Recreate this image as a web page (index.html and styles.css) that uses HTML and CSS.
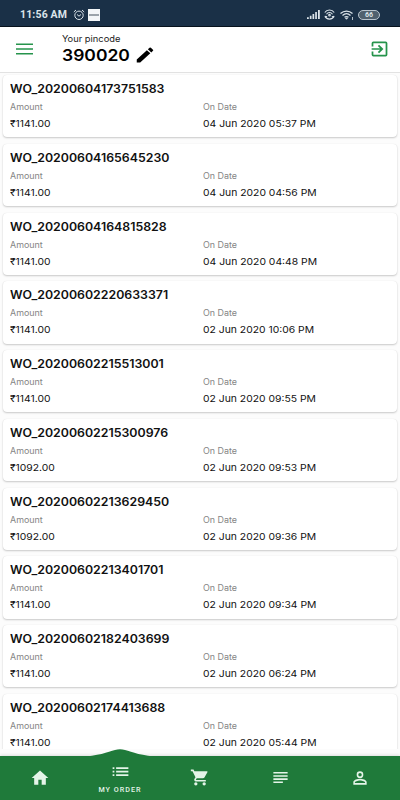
FILE: index.html
```html
<!DOCTYPE html>
<html lang="en">
<head>
<meta charset="utf-8">
<title>My Order</title>
<link rel="stylesheet" href="styles.css">
</head>
<body>
<div class="status">
  <span class="clock">11:56 AM</span>
  <svg class="alarm" width="12" height="12" viewBox="0 0 12 12" fill="none" stroke="currentColor"><circle cx="6" cy="6.3" r="4.2"/><path d="M.8 3 3 1M11.2 3 9 1M4 5.5 6 7.2 8 5.5"/></svg>
  <svg class="note" width="12" height="12" viewBox="0 0 12 12"><path fill="#f3f6f8" d="M0 0h12v12H0z"/><path stroke="#43515d" d="M1 6h10"/></svg>
  <svg class="signal" width="13" height="9" viewBox="0 0 13 9" fill="currentColor"><path d="M0 7.2h1.8V9H0zM2.8 5.8h1.7V9H2.8zM5.5 4h1.7v5H5.5zM8.2 2h1.7v7H8.2zM11 0h1.8v9H11z"/></svg>
  <svg class="hotspot" width="11" height="11" viewBox="0 0 11 11" fill="none" stroke="currentColor" stroke-width="1.1"><path d="M.8 3.500C3 .2 8 .2 10.200 3.500M2.500 5.200C4 3 7 3 8.500 5.200M.8 7.300C2.500 11 8.500 11 10.200 7.300M.8 7.300l2.400.4M10.200 7.300l-2.400.4"/><circle cx="5.500" cy="6.200" r=".8"/></svg>
  <svg class="wifi" width="14" height="10" viewBox="0 0 14 10" fill="none" stroke="currentColor" stroke-width="1.3"><path d="M.5 3.500C4 .2 9 .2 12.500 3.500M2.500 5.500C5 3.200 8 3.200 10.500 5.500M4.500 7.300C6 6.200 7 6.200 8.500 7.300"/><path d="M5.500 8.200h2L6.500 9.300zM12.500 7v3" stroke-width=".8" fill="currentColor"/></svg>
  <span class="battery">66</span>
</div>
<header class="bar">
  <svg class="menu" width="17" height="12" viewBox="0 0 17 12" fill="#26944c"><path d="M0 .5h17v1.600H0zM0 5.200h17v1.600H0zM0 9.900h17v1.600H0z"/></svg>
  <div class="pin">
    <div class="pin-label">Your pincode</div>
    <div class="pin-row"><span class="pin-code"><b>390020</b></span>
      <svg class="pencil" width="22" height="20" viewBox="0 0 24 24" preserveAspectRatio="none"><path d="M3 17.250V21h3.750L17.810 9.940l-3.750-3.750L3 17.250zM20.710 7.040a1 1 0 0 0 0-1.410l-2.340-2.340a1 1 0 0 0-1.410 0l-1.830 1.830 3.750 3.750 1.830-1.830z"/></svg>
    </div>
  </div>
  <svg class="exit" width="21" height="20" viewBox="0 0 24 24" preserveAspectRatio="none" fill="#26944c"><path d="M10.090 15.590 11.500 17l5-5-5-5-1.410 1.410L12.670 11H3v2h9.670l-2.580 2.590zM19 3H5a2 2 0 0 0-2 2v4h2V5h14v14H5v-4H3v4a2 2 0 0 0 2 2h14a2 2 0 0 0 2-2V5a2 2 0 0 0-2-2z"/></svg>
</header>
<main class="orders">
  <article class="card"><h2>WO_20200604173751583</h2><div class="cols"><div><small>Amount</small><p class="amount">₹1141.00</p></div><div><small>On Date</small><p>04 Jun 2020 05:37 PM</p></div></div></article>
  <article class="card"><h2>WO_20200604165645230</h2><div class="cols"><div><small>Amount</small><p class="amount">₹1141.00</p></div><div><small>On Date</small><p>04 Jun 2020 04:56 PM</p></div></div></article>
  <article class="card"><h2>WO_20200604164815828</h2><div class="cols"><div><small>Amount</small><p class="amount">₹1141.00</p></div><div><small>On Date</small><p>04 Jun 2020 04:48 PM</p></div></div></article>
  <article class="card"><h2>WO_20200602220633371</h2><div class="cols"><div><small>Amount</small><p class="amount">₹1141.00</p></div><div><small>On Date</small><p>02 Jun 2020 10:06 PM</p></div></div></article>
  <article class="card"><h2>WO_20200602215513001</h2><div class="cols"><div><small>Amount</small><p class="amount">₹1141.00</p></div><div><small>On Date</small><p>02 Jun 2020 09:55 PM</p></div></div></article>
  <article class="card"><h2>WO_20200602215300976</h2><div class="cols"><div><small>Amount</small><p class="amount">₹1092.00</p></div><div><small>On Date</small><p>02 Jun 2020 09:53 PM</p></div></div></article>
  <article class="card"><h2>WO_20200602213629450</h2><div class="cols"><div><small>Amount</small><p class="amount">₹1092.00</p></div><div><small>On Date</small><p>02 Jun 2020 09:36 PM</p></div></div></article>
  <article class="card"><h2>WO_20200602213401701</h2><div class="cols"><div><small>Amount</small><p class="amount">₹1141.00</p></div><div><small>On Date</small><p>02 Jun 2020 09:34 PM</p></div></div></article>
  <article class="card"><h2>WO_20200602182403699</h2><div class="cols"><div><small>Amount</small><p class="amount">₹1141.00</p></div><div><small>On Date</small><p>02 Jun 2020 06:24 PM</p></div></div></article>
  <article class="card"><h2>WO_20200602174413688</h2><div class="cols"><div><small>Amount</small><p class="amount">₹1141.00</p></div><div><small>On Date</small><p>02 Jun 2020 05:44 PM</p></div></div></article>
</main>
<nav class="tabs">
  <svg class="hump" width="80" height="8" viewBox="0 0 80 8"><path fill="#1f7a3a" d="M0 8C18 7 28 3 35 1Q40-.5 45 1C52 3 62 7 80 8z"/></svg>
  <div class="tab"><svg width="20" height="20" viewBox="0 0 24 24"><path d="M10 20v-6h4v6h5v-8h3L12 3 2 12h3v8z"/></svg></div>
  <div class="tab active"><svg width="21" height="21" viewBox="0 0 24 24"><path d="M3 13h2v-2H3v2zm0 4h2v-2H3v2zm0-8h2V7H3v2zm4 4h14v-2H7v2zm0 4h14v-2H7v2zM7 7v2h14V7H7z"/></svg><span>MY ORDER</span></div>
  <div class="tab"><svg width="20" height="19" viewBox="0 0 24 24" preserveAspectRatio="none"><path d="M7 18a2 2 0 1 0 0 4 2 2 0 0 0 0-4zM1 2v2h2l3.600 7.590-1.350 2.450C4.520 15.370 5.480 17 7 17h12v-2H7.420a.25.25 0 0 1-.25-.25l.03-.12.900-1.630h7.450c.75 0 1.410-.41 1.750-1.030l3.580-6.490A1 1 0 0 0 20 4H5.210l-.94-2H1zm16 16a2 2 0 1 0 0 4 2 2 0 0 0 0-4z"/></svg></div>
  <div class="tab"><svg width="19" height="19" viewBox="0 0 24 24"><path d="M3 15h18v-2H3v2zm0 4h12v-2H3v2zm0-8h18V9H3v2zm0-6v2h18V5H3z"/></svg></div>
  <div class="tab"><svg width="20" height="20" viewBox="0 0 24 24"><path d="M12 5.900a2.100 2.100 0 1 1 0 4.200 2.100 2.100 0 0 1 0-4.200m0 9c2.970 0 6.100 1.460 6.100 2.100v1.100H5.900V17c0-.64 3.130-2.100 6.100-2.100M12 4a4 4 0 1 0 0 8 4 4 0 0 0 0-8zm0 9c-2.670 0-8 1.340-8 4v3h16v-3c0-2.660-5.330-4-8-4z"/></svg></div>
</nav>
</body>
</html>
```
FILE: styles.css
```css
* { box-sizing: border-box; }
body {
  margin: 0;
  height: 800px;
  display: flex;
  flex-direction: column;
  overflow: hidden;
  background: #fcfcfc;
  color: #111;
  font-family: Inter, "Liberation Sans", sans-serif;
  white-space: nowrap;
}
.status {
  flex: none;
  height: 27px;
  padding: 3px 20px 0;
  display: flex;
  align-items: center;
  background: #1a3047;
  border-bottom: 1px solid #07121d;
  color: #dce4ea;
}
.clock { width: 52.500px; font: 700 10.5px/14px Roboto, sans-serif; letter-spacing: .15px; }
.note { margin-left: 3px; }
.signal { margin-left: auto; }
.hotspot { margin-left: 4px; }
.wifi { margin-left: 5px; }
.battery {
  width: 22px;
  height: 10px;
  margin-left: 4px;
  border: 1px solid #b8c4ce;
  border-radius: 5px;
  background: #50616f;
  font: 700 7px/8px Roboto, sans-serif;
  text-align: center;
}
.bar {
  flex: none;
  height: 46px;
  padding: 0 10.500px 0 16px;
  display: flex;
  background: #fff;
  border-bottom: 1px solid #e2e2e2;
}
.menu { margin-top: 16px; }
.pin { flex: 1; margin-left: 29px; padding-top: 6px; }
.pin-label { font-size: 8.8px; line-height: 12px; color: #222; transform: scaleX(1.06); transform-origin: left; }
.pin-row { display: flex; height: 20px; align-items: center; }
.pin-code { width: 72px; font-size: 16.6px; line-height: 20px; color: #000; }
.pin-code b { display: inline-block; font-weight: 600; transform: scaleX(1.055); transform-origin: left; }
.exit { margin-top: 12px; }
.orders {
  flex: none;
  height: 676px;
  overflow: hidden;
  padding: 2px 3px 0;
  display: flex;
  flex-direction: column;
  gap: 6.500px;
}
.card {
  flex: none;
  height: 62.25px;
  padding: 7px 7px 0;
  border-radius: 4px;
  background: #fff;
  box-shadow: 0 1px 2px rgba(0, 0, 0, .2), 0 0 1px rgba(0, 0, 0, .1);
}
/* Wide, low letterforms */
.card h2, .cols small, .cols p { transform: scaleX(1.08); transform-origin: left; }
.card h2 { margin: 0; font-size: 11.45px; font-weight: 600; line-height: 15px; }
.cols { display: grid; grid-template-columns: 193px 1fr; padding-top: 5px; }
.cols small { display: block; font-size: 8.25px; line-height: 11px; color: #858585; }
.cols p { margin: 4px 0 0; font-size: 9.6px; line-height: 13px; }
.tabs {
  flex: none;
  position: relative;
  height: 44px;
  margin-top: auto;
  display: grid;
  grid-template-columns: repeat(5, 1fr);
  background: #1f7a3a;
  box-shadow: 0 -1px 3px rgba(0, 0, 0, .12);
}
.hump { position: absolute; left: 80px; top: -7.500px; }
.tab { display: flex; flex-direction: column; align-items: center; padding-top: 11.500px; }
.tab svg { fill: #e4f4e8; }
.tab.active { padding-top: 5px; }
.tab span { margin-top: 2.500px; font: 500 7.2px/10px Roboto, sans-serif; letter-spacing: 1px; color: #e4f4e8; }
```
